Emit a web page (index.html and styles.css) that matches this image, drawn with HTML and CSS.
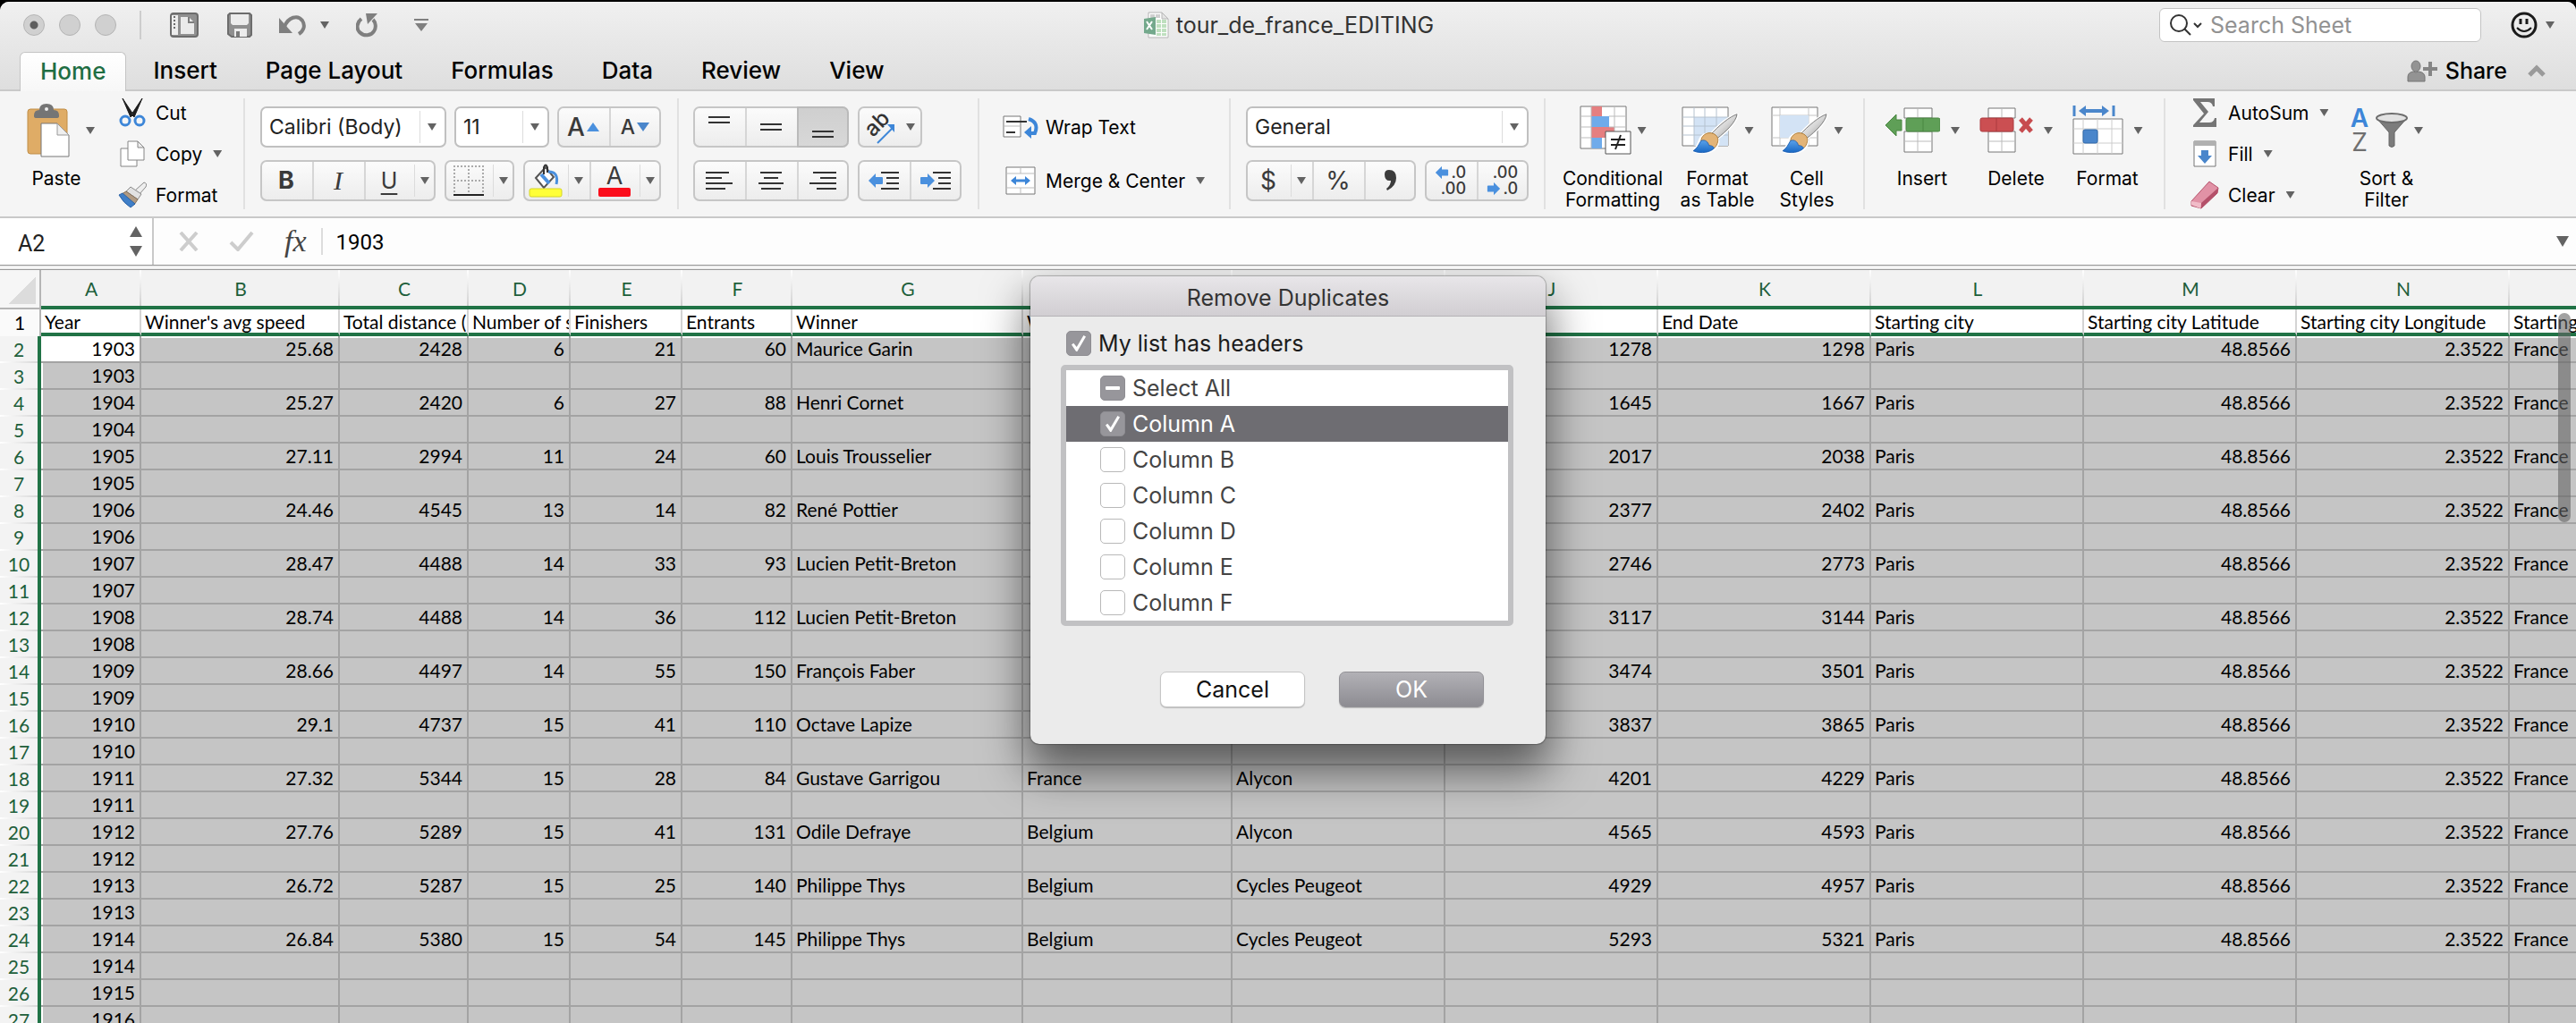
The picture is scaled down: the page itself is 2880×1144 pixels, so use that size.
FILE: index.html
```html
<!DOCTYPE html>
<html lang="en">
<head>
<meta charset="utf-8">
<title>tour_de_france_EDITING</title>
<link rel="stylesheet" href="styles.css">
</head>
<body>
<svg class="defs" aria-hidden="true">
  <defs>
    <linearGradient id="steel" x1="0" y1="0" x2="1" y2="1"><stop offset="0" stop-color="#fff"/><stop offset=".5" stop-color="#d8d8d8"/><stop offset="1" stop-color="#8d8d8d"/></linearGradient>
    <linearGradient id="paint" x1="0" y1="0" x2="0" y2="1"><stop offset="0" stop-color="#5aa2ea"/><stop offset="1" stop-color="#1767c4"/></linearGradient>
    <symbol id="brush" viewBox="0 0 52 62" preserveAspectRatio="none">
      <path d="M50 1C41 5 29 18 20 31l-4-1C8 32 8 41 6 46c-1 4-4 7-6 9 9 5 21 3 26-6 2-4 3-8 1-12C38 26 49 12 50 1z" fill="none" stroke="#fff" stroke-width="4"/>
      <path d="M50 1C42 4 29 18 20 31l7 6C38 26 49 12 50 1z" fill="url(#steel)" stroke="#6d6d6d" stroke-width="1"/>
      <path d="M13 31c5-5 13-2 15 5 1 5-1 12-4 15-6 0-12-5-15-10 0-4 1-7 4-10z" fill="#e3b477" stroke="#a9762f" stroke-width="1"/>
      <path d="M9 40c5-2 8 2 9 7 2 0 5 1 6 4-4 6-15 9-24 4 5-4 6-9 9-15z" fill="url(#paint)" stroke="#1f5fb0" stroke-width="1"/>
    </symbol>
    <symbol id="left" viewBox="0 0 18 18"><path d="M1 9 9 1v4h7a1 1 0 0 1 1 1v6a1 1 0 0 1-1 1H9v4z" fill="#4a90de"/></symbol>
  </defs>
</svg>
<div class="window">
  <header class="chrome">
    <div class="titlebar">
      <div class="quick">
        <button class="light light-dot" aria-label="Close"></button>
        <button class="light" aria-label="Minimize"></button>
        <button class="light" aria-label="Zoom"></button>
        <span class="quick-sep"></span>
        <button class="tool side" aria-label="Templates"><svg width="32" height="28"><rect x="1" y="1" width="30" height="26" rx="3" fill="#909090" stroke="#6c6c6c" stroke-width="2"/><path d="M2 3h7v22H2z" fill="#ececec"/><path d="M5 4v14" stroke="#6c6c6c" stroke-width="2" stroke-dasharray="2 2"/><path d="M12 5h9l6 6v13H12z" fill="#eaeaea"/><path d="M21 5v6h6" fill="none" stroke="#7d7d7d" stroke-width="2"/></svg></button>
        <button class="tool" aria-label="Save"><svg width="28" height="28"><path d="M3 1h22l2 2v22l-2 2H5l-4-3V3z" fill="#8f8f8f" stroke="#6c6c6c" stroke-width="2"/><path d="M4 2h20v10l-2 2H6l-2-2z" fill="#ececec"/><path d="M8 18h14v9H8z" fill="#ececec"/><path d="M10 21h4v6h-4z" fill="#7a7a7a"/></svg></button>
        <button class="tool undo" aria-label="Undo"><svg width="30" height="24"><path d="M6 14C10 3 21 0 26 7c4 6 1 12-4 15" fill="none" stroke="#7f7f7f" stroke-width="4"/><path d="M0 4v17h15z" fill="#7f7f7f"/></svg><i class="caret"></i></button>
        <button class="tool" aria-label="Repeat"><svg width="24" height="28"><path d="M6 7C1 11 0 18 4 22c5 5 13 4 16-1 3-4 2-10-1-13" fill="none" stroke="#7f7f7f" stroke-width="4"/><path d="M11 1h13l-11 12z" fill="#7f7f7f"/></svg></button>
        <button class="tool custom" aria-label="Customize toolbar"><svg width="18" height="16"><path d="M1 1h16v2H1zM2 6h14l-7 9z" fill="#7f7f7f"/></svg></button>
      </div>
      <h1 class="title"><svg width="28" height="30"><path d="M5 1h15l7 7v21H5z" fill="#fdfdfd" stroke="#b5b5b5"/><path d="M20 1v7h7z" fill="#e4e4e4" stroke="#b5b5b5"/><path d="M7 3h5v4H7zM13 3h5v4h-5z" fill="#cfcfcf"/><path d="M14 9h5v4h-5zM20 9h5v4h-5zM14 14h5v4h-5zM20 14h5v4h-5zM14 19h5v4h-5zM20 19h5v4h-5zM14 24h5v3h-5zM20 24h5v3h-5z" fill="#bfe0bf"/><path d="M0 8l13-2v20L0 24z" fill="#74a98c"/><path d="M3 11l6 9M9 11l-6 9" stroke="#fff" stroke-width="2"/></svg>tour_de_france_EDITING</h1>
      <div class="right">
        <label class="search"><svg width="36" height="24"><circle cx="10" cy="10" r="9" fill="none" stroke="#333" stroke-width="2"/><path d="M16 16l7 7M27 10l4 4 4-4" fill="none" stroke="#333" stroke-width="2"/></svg><input type="search" placeholder="Search Sheet" aria-label="Search Sheet"></label>
        <button class="smile" aria-label="Feedback"><svg width="30" height="30"><circle cx="15" cy="15" r="13" fill="none" stroke="#1b1b1b" stroke-width="3"/><path d="M11 8v6M18 8v6" stroke="#1b1b1b" stroke-width="3"/><path d="M7 18q8 8 16 0" fill="none" stroke="#1b1b1b" stroke-width="2"/></svg><i class="caret"></i></button>
      </div>
    </div>
    <nav class="tabs">
      <a class="tab active" href="#home">Home</a>
      <a class="tab" href="#insert">Insert</a>
      <a class="tab" href="#layout">Page Layout</a>
      <a class="tab" href="#formulas">Formulas</a>
      <a class="tab" href="#data">Data</a>
      <a class="tab" href="#review">Review</a>
      <a class="tab" href="#view">View</a>
      <div class="share">
        <button class="share-btn"><svg width="34" height="25"><ellipse cx="10" cy="7" rx="5" ry="6" fill="#939393" stroke="#757575"/><path d="M1 24v-5q0-5 6-6 3 2 6 0 7 1 7 6v5z" fill="#939393" stroke="#757575"/><path d="M18 10h16M26 2v16" stroke="#858585" stroke-width="4"/></svg>Share</button>
        <button class="collapse" aria-label="Collapse ribbon"><svg width="20" height="14"><path d="M2 12l8-8 8 8" fill="none" stroke="#9a9a9a" stroke-width="5"/></svg></button>
      </div>
    </nav>
  </header>

  <section class="ribbon" aria-label="Home">
    <div class="group clip">
      <button class="big paste"><span class="big-icon"><svg width="48" height="60"><rect x="1" y="6" width="44" height="50" rx="3" fill="#dfac66" stroke="#c08d46"/><path d="M8 13q0-6 6-6 0-7 8-7t8 7q6 0 6 6v1q0 2-3 2H11q-3 0-3-2z" fill="#757575"/><circle cx="22" cy="6" r="2" fill="#eee"/><path d="M16 22h18l13 13v24H16z" fill="#fff" stroke="#777"/><path d="M34 22v13h13z" fill="#efefef" stroke="#999"/></svg><i class="caret"></i></span><span class="big-label">Paste</span></button>
      <div class="stack clip-stack">
        <button class="item"><span class="ico"><svg width="30" height="32"><path d="M4 0l12 18-3 3zM26 0L14 18l3 3z" fill="#1d1d1d" stroke="#1d1d1d"/><ellipse cx="7" cy="25" rx="5" ry="5" fill="none" stroke="#3d86d8" stroke-width="3"/><ellipse cx="23" cy="25" rx="5" ry="5" fill="none" stroke="#3d86d8" stroke-width="3"/></svg></span>Cut</button>
        <button class="item"><span class="ico"><svg width="28" height="30"><path d="M1 9h18v20H1z" fill="#fff" stroke="#858585"/><path d="M9 1h11l7 7v14H9z" fill="#fff" stroke="#858585"/><path d="M20 1v7h7z" fill="#eee" stroke="#858585"/></svg></span>Copy<i class="caret"></i></button>
        <button class="item"><span class="ico"><svg width="32" height="30"><path d="M29 1q4 1 2 5l-7 8-5-4z" fill="#eee" stroke="#888"/><path d="M14 6l12 8-4 6L9 11z" fill="#e2e2e2" stroke="#8a8a8a"/><path d="M9 11l13 9-4 6L4 14z" fill="#b09a82" stroke="#84705a"/><path d="M5 13l14 12-5 4Q6 24 1 15z" fill="#3f7fc8" stroke="#2c62a4"/></svg></span>Format</button>
      </div>
    </div>
    <span class="sep"></span>

    <div class="group rows font-group">
      <div class="row row-font">
        <span class="combo font-name"><select aria-label="Font"><option>Calibri (Body)</option></select><i class="caret"></i></span>
        <span class="combo font-size"><select aria-label="Font size"><option>11</option></select><i class="caret"></i></span>
        <span class="seg">
          <button class="w58 grow" aria-label="Increase font size"><b class="glyph-a">A</b><svg width="14" height="10"><path d="M7 0l7 10H0z" fill="#4a90de"/></svg></button>
          <button class="w58 grow" aria-label="Decrease font size"><b class="glyph-a small">A</b><svg width="14" height="10"><path d="M7 10l7-10H0z" fill="#4a86cb"/></svg></button>
        </span>
      </div>
      <div class="row">
        <span class="seg">
          <button class="w58"><b>B</b></button><button class="w58 italic">I</button><button class="w56 under">U</button><button class="w24 inner" aria-label="Underline styles"><i class="caret"></i></button>
        </span>
        <span class="seg">
          <button class="w54" aria-label="Borders"><svg width="34" height="34"><path d="M1 0v32M17 0v32M33 0v32M0 1h34M0 17h34" stroke="#aaa" stroke-width="2" stroke-dasharray="2 2"/><path d="M0 33h34" stroke="#222" stroke-width="2"/></svg></button><button class="w24 inner" aria-label="Border styles"><i class="caret"></i></button>
        </span>
        <span class="seg">
          <button class="w50" aria-label="Fill colour"><svg width="38" height="38"><path d="M8 16l11-12 9 11-11 12z" fill="#fff" stroke="#555" stroke-width="2"/><path d="M14 12l9 10" stroke="#4a90de" stroke-width="4"/><path d="M17 12V4q2-5 4 0v6" fill="none" stroke="#333" stroke-width="2"/><path d="M22 9q12 0 9 14" fill="none" stroke="#4a90de" stroke-width="3"/><rect x="1" y="28" width="36" height="9" rx="2" fill="#ffff38" stroke="#d5d526"/></svg></button><button class="w24 inner" aria-label="Fill colours"><i class="caret"></i></button>
          <button class="w56 color" aria-label="Font colour"><span>A</span><i class="swatch"></i></button><button class="w24 inner" aria-label="Font colours"><i class="caret"></i></button>
        </span>
      </div>
    </div>
    <span class="sep"></span>

    <div class="group rows align-group">
      <div class="row">
        <span class="seg">
          <button class="w58" aria-label="Align top"><svg width="32" height="32"><path d="M4 5h24M4 11h24" stroke="#333" stroke-width="2"/></svg></button>
          <button class="w58" aria-label="Align middle"><svg width="32" height="32"><path d="M4 13h24M4 19h24" stroke="#333" stroke-width="2"/></svg></button>
          <button class="w58 pressed" aria-label="Align bottom"><svg width="32" height="32"><path d="M4 21h24M4 27h24" stroke="#333" stroke-width="2"/></svg></button>
        </span>
        <span class="seg"><button class="orient" aria-label="Orientation"><svg class="orient-icon" width="36" height="40"><text x="0" y="0" transform="translate(9 32) rotate(-45)" class="ab">ab</text><path d="M14 38L31 21" stroke="#3d86d8" stroke-width="2"/><path d="M25 17h8v9z" fill="#3d86d8"/></svg><i class="caret"></i></button></span>
      </div>
      <div class="row">
        <span class="seg">
          <button class="w58" aria-label="Align left"><svg width="32" height="24"><path d="M1 3h26M1 9h18M1 15h30M1 21h22" stroke="#333" stroke-width="2"/></svg></button>
          <button class="w58" aria-label="Align centre"><svg width="32" height="24"><path d="M4 3h24M8 9h16M2 15h28M5 21h22" stroke="#333" stroke-width="2"/></svg></button>
          <button class="w58" aria-label="Align right"><svg width="32" height="24"><path d="M5 3h26M13 9h18M1 15h30M9 21h22" stroke="#333" stroke-width="2"/></svg></button>
        </span>
        <span class="seg">
          <button class="w58" aria-label="Decrease indent"><svg width="36" height="26"><use href="#left" x="0" y="4" width="18" height="18"/><path d="M15 4h20M21 10h14M21 16h14M15 22h20" stroke="#333" stroke-width="2"/></svg></button>
          <button class="w58" aria-label="Increase indent"><svg width="36" height="26"><use href="#left" transform="translate(18 4) scale(-1 1)" width="18" height="18"/><path d="M15 4h20M21 10h14M21 16h14M15 22h20" stroke="#333" stroke-width="2"/></svg></button>
        </span>
      </div>
    </div>
    <span class="sep"></span>

    <div class="group wrap-group">
      <button class="item"><span class="ico wide"><svg width="40" height="26"><path d="M1 1h19v23H1z" fill="#fff" stroke="#777"/><path d="M1 12h19" stroke="#bbb"/><path d="M4 7h23M4 19h10" stroke="#333" stroke-width="2"/><path d="M29 4q12 4 7 16h-5" fill="none" stroke="#3d86d8" stroke-width="4"/><path d="M24 19l8-7v14z" fill="#3d86d8"/></svg></span>Wrap Text</button>
      <button class="item"><span class="ico wide"><svg width="34" height="32"><path d="M1 1h32v30H1z" fill="#fff" stroke="#777"/><path d="M1 8h32M1 24h32M17 1v7M17 24v7" stroke="#bbb"/><path d="M8 16h18" stroke="#3d86d8" stroke-width="3"/><path d="M6 16l6-5v10zM28 16l-6-5v10z" fill="#3d86d8"/></svg></span>Merge &amp; Center<i class="caret"></i></button>
    </div>
    <span class="sep"></span>

    <div class="group rows number-group">
      <div class="row"><span class="combo format"><select aria-label="Number format"><option>General</option></select><i class="caret"></i></span></div>
      <div class="row">
        <span class="seg">
          <button class="w50 sym">$</button><button class="w24 inner" aria-label="Currencies"><i class="caret"></i></button><button class="w58 sym">%</button><button class="w58" aria-label="Comma style"><svg width="14" height="24"><path d="M1 5q0-5 5-5 8 0 8 9 0 9-10 14l-1-2q5-4 5-9-7 1-7-7z" fill="#3c3c3c"/></svg></button>
        </span>
        <span class="seg">
          <button class="w58 dec" aria-label="Increase decimal"><span><svg width="16" height="14"><use href="#left" width="16" height="16" y="-1"/></svg>.0</span><span>.00</span></button>
          <button class="w58 dec" aria-label="Decrease decimal"><span>.00</span><span><svg width="16" height="14"><use href="#left" transform="translate(16 -1) scale(-1 1)" width="16" height="16"/></svg>.0</span></button>
        </span>
      </div>
    </div>
    <span class="sep"></span>

    <div class="group styles-group">
      <button class="big cond"><span class="big-icon tight"><svg width="58" height="56"><path d="M1 1h51v47H1z" fill="#fff" stroke="#777"/><path d="M13 1h12v11H13zM13 24h26v12H13z" fill="#e57f80"/><path d="M13 12h20v12H13zM13 36h12v12H13z" fill="#6fabea"/><path d="M1 12h12M33 12h19M1 24h12M33 24h19M1 36h12M39 1v35M13 1v47" stroke="#bbb"/><path d="M29 29h28v25H29z" fill="#fff" stroke="#555"/><path d="M35 38h16M35 44h16M46 33l-6 16" stroke="#222" stroke-width="2"/></svg><i class="caret"></i></span><span class="big-label">Conditional<br>Formatting</span></button>
      <button class="big table-btn"><span class="big-icon tight"><svg width="64" height="56"><path d="M1 2h51v43H1z" fill="#fff" stroke="#777"/><path d="M14 13h38v32H14z" fill="#d3e3f5"/><path d="M14 2v43M26 2v43M39 2v43M1 13h51M1 23h51M1 33h51" stroke="#b5c2cf"/><use href="#brush" x="13" y="9" width="51" height="47"/></svg><i class="caret"></i></span><span class="big-label">Format<br>as Table</span></button>
      <button class="big cell-btn"><span class="big-icon tight"><svg width="64" height="56"><path d="M1 2h51v43H1z" fill="#fff" stroke="#777"/><path d="M10 2v43M42 2v43M1 11h51M1 36h51" stroke="#c4c4c4"/><path d="M10 11h32v25H10z" fill="#d3e3f5"/><use href="#brush" x="13" y="9" width="51" height="47"/></svg><i class="caret"></i></span><span class="big-label">Cell<br>Styles</span></button>
    </div>
    <span class="sep"></span>

    <div class="group cells-group">
      <button class="big insert"><span class="big-icon"><svg width="62" height="56"><path d="M22 3h31v11H22zM22 29h31v23H22z" fill="#fff" stroke="#777"/><path d="M37 3v11M37 29v23M22 40h31" stroke="#bbb"/><rect x="24" y="14" width="38" height="15" rx="2" fill="#5f9f57" stroke="#4a8742"/><path d="M43 14v15" stroke="#4a8742"/><path d="M1 22l12-12v6h6v12h-6v6z" fill="#5f9f57" stroke="#4a8742"/></svg><i class="caret"></i></span><span class="big-label">Insert</span></button>
      <button class="big delete"><span class="big-icon"><svg width="60" height="56"><path d="M10 3h30v11H10zM10 29h30v23H10z" fill="#fff" stroke="#777"/><path d="M25 3v11M25 29v23M10 40h30" stroke="#bbb"/><rect x="1" y="14" width="37" height="15" rx="2" fill="#cb4f52" stroke="#ac3b3e"/><path d="M19 14v15" stroke="#ac3b3e"/><path d="M46 15l12 14M58 15L46 29" stroke="#c74b4e" stroke-width="5"/></svg><i class="caret"></i></span><span class="big-label">Delete</span></button>
      <button class="big format"><span class="big-icon"><svg width="57" height="58"><path d="M2 1v12M46 1v12" stroke="#4a86cb" stroke-width="3"/><path d="M12 7h24" stroke="#4a86cb" stroke-width="4"/><path d="M7 7l8-6v12zM41 7l-8-6v12z" fill="#4a86cb"/><path d="M1 16h55v39H1z" fill="#fff" stroke="#777"/><path d="M12 16v39M28 16v39M44 16v39M1 27h55M1 43h55" stroke="#ccc"/><rect x="12" y="28" width="16" height="15" rx="2" fill="#4a86cb" stroke="#2f68aa"/></svg><i class="caret"></i></span><span class="big-label">Format</span></button>
    </div>
    <span class="sep"></span>

    <div class="group edit-group">
      <div class="stack edit-stack">
        <button class="item"><span class="ico"><svg width="28" height="32"><path d="M1 0h24v9h-2q-1-5-6-5H9l9 11L8 27h11q5 0 6-5h2v10H1v-2l12-13L1 2z" fill="#757575"/></svg></span>AutoSum<i class="caret"></i></button>
        <button class="item"><span class="ico"><svg width="26" height="30"><path d="M1 1h24v28H1z" fill="#fff" stroke="#777"/><path d="M1 1h24v5H1z" fill="#b0b0b0"/><path d="M9 11h8v6h4l-8 9-8-9h4z" fill="#4a86cb"/></svg></span>Fill<i class="caret"></i></button>
        <button class="item"><span class="ico"><svg width="32" height="32"><path d="M1 23L21 1l10 7-1 6L12 31 1 28z" fill="#e192a6" stroke="#b5526b"/><path d="M1 23l11 2-1 6-10-4z" fill="#f0bcc8"/><path d="M12 25L31 8l-1 6-18 17z" fill="#b4506a"/></svg></span>Clear<i class="caret"></i></button>
      </div>
      <button class="big sort"><span class="big-icon tight"><span class="az"><b>A</b><span>Z</span></span><svg width="36" height="40"><path d="M1 6l14 16v15q3 3 6 0V22L35 6z" fill="#7c7c7c" stroke="#666"/><ellipse cx="18" cy="6" rx="17" ry="5" fill="#e2e2e2" stroke="#6d6d6d" stroke-width="2"/></svg><i class="caret"></i></span><span class="big-label">Sort &amp;<br>Filter</span></button>
    </div>
  </section>

  <section class="formula">
    <div class="namebox"><input type="text" value="A2" aria-label="Name box"><svg width="14" height="34"><path d="M7 0l7 12H0zM7 34l7-12H0z" fill="#636363"/></svg></div>
    <button class="f-btn" aria-label="Cancel entry"><svg width="22" height="22"><path d="M2 1l18 20M20 1L2 21" stroke="#cdcdcd" stroke-width="4"/></svg></button>
    <button class="f-btn check" aria-label="Accept entry"><svg width="28" height="22"><path d="M2 12l8 8L26 1" fill="none" stroke="#cdcdcd" stroke-width="4"/></svg></button>
    <button class="f-btn fx">fx</button>
    <span class="f-sep"></span>
    <input class="f-input" type="text" value="1903" aria-label="Formula">
    <button class="f-btn" aria-label="Expand formula bar"><svg width="14" height="12"><path d="M0 0h14L7 12z" fill="#636363"/></svg></button>
  </section>
  <div class="rule"></div>

  <main class="sheet">
    <table class="grid">
      <colgroup><col class="c-row"><col class="c-a"><col class="c-b"><col class="c-c"><col class="c-d"><col class="c-e"><col class="c-f"><col class="c-g"><col class="c-h"><col><col><col><col><col><col><col></colgroup>
      <thead><tr><th class="corner"></th><th>A</th><th>B</th><th>C</th><th>D</th><th>E</th><th>F</th><th>G</th><th>H</th><th>I</th><th>J</th><th>K</th><th>L</th><th>M</th><th>N</th><th></th></tr></thead>
      <tbody>
        <tr class="names"><th>1</th><td>Year</td><td>Winner's avg speed</td><td>Total distance (km)</td><td>Number of stages</td><td>Finishers</td><td>Entrants</td><td>Winner</td><td>Winner's country</td><td></td><td></td><td>End Date</td><td>Starting city</td><td>Starting city Latitude</td><td>Starting city Longitude</td><td>Starting country</td></tr>
        <tr><th>2</th><td>1903</td><td>25.68</td><td>2428</td><td>6</td><td>21</td><td>60</td><td>Maurice Garin</td><td></td><td></td><td>1278</td><td>1298</td><td>Paris</td><td>48.8566</td><td>2.3522</td><td>France</td></tr>
        <tr><th>3</th><td>1903</td><td></td><td></td><td></td><td></td><td></td><td></td><td></td><td></td><td></td><td></td><td></td><td></td><td></td><td></td></tr>
        <tr><th>4</th><td>1904</td><td>25.27</td><td>2420</td><td>6</td><td>27</td><td>88</td><td>Henri Cornet</td><td></td><td></td><td>1645</td><td>1667</td><td>Paris</td><td>48.8566</td><td>2.3522</td><td>France</td></tr>
        <tr><th>5</th><td>1904</td><td></td><td></td><td></td><td></td><td></td><td></td><td></td><td></td><td></td><td></td><td></td><td></td><td></td><td></td></tr>
        <tr><th>6</th><td>1905</td><td>27.11</td><td>2994</td><td>11</td><td>24</td><td>60</td><td>Louis Trousselier</td><td></td><td></td><td>2017</td><td>2038</td><td>Paris</td><td>48.8566</td><td>2.3522</td><td>France</td></tr>
        <tr><th>7</th><td>1905</td><td></td><td></td><td></td><td></td><td></td><td></td><td></td><td></td><td></td><td></td><td></td><td></td><td></td><td></td></tr>
        <tr><th>8</th><td>1906</td><td>24.46</td><td>4545</td><td>13</td><td>14</td><td>82</td><td>René Pottier</td><td></td><td></td><td>2377</td><td>2402</td><td>Paris</td><td>48.8566</td><td>2.3522</td><td>France</td></tr>
        <tr><th>9</th><td>1906</td><td></td><td></td><td></td><td></td><td></td><td></td><td></td><td></td><td></td><td></td><td></td><td></td><td></td><td></td></tr>
        <tr><th>10</th><td>1907</td><td>28.47</td><td>4488</td><td>14</td><td>33</td><td>93</td><td>Lucien Petit-Breton</td><td></td><td></td><td>2746</td><td>2773</td><td>Paris</td><td>48.8566</td><td>2.3522</td><td>France</td></tr>
        <tr><th>11</th><td>1907</td><td></td><td></td><td></td><td></td><td></td><td></td><td></td><td></td><td></td><td></td><td></td><td></td><td></td><td></td></tr>
        <tr><th>12</th><td>1908</td><td>28.74</td><td>4488</td><td>14</td><td>36</td><td>112</td><td>Lucien Petit-Breton</td><td></td><td></td><td>3117</td><td>3144</td><td>Paris</td><td>48.8566</td><td>2.3522</td><td>France</td></tr>
        <tr><th>13</th><td>1908</td><td></td><td></td><td></td><td></td><td></td><td></td><td></td><td></td><td></td><td></td><td></td><td></td><td></td><td></td></tr>
        <tr><th>14</th><td>1909</td><td>28.66</td><td>4497</td><td>14</td><td>55</td><td>150</td><td>François Faber</td><td></td><td></td><td>3474</td><td>3501</td><td>Paris</td><td>48.8566</td><td>2.3522</td><td>France</td></tr>
        <tr><th>15</th><td>1909</td><td></td><td></td><td></td><td></td><td></td><td></td><td></td><td></td><td></td><td></td><td></td><td></td><td></td><td></td></tr>
        <tr><th>16</th><td>1910</td><td>29.1</td><td>4737</td><td>15</td><td>41</td><td>110</td><td>Octave Lapize</td><td></td><td></td><td>3837</td><td>3865</td><td>Paris</td><td>48.8566</td><td>2.3522</td><td>France</td></tr>
        <tr><th>17</th><td>1910</td><td></td><td></td><td></td><td></td><td></td><td></td><td></td><td></td><td></td><td></td><td></td><td></td><td></td><td></td></tr>
        <tr><th>18</th><td>1911</td><td>27.32</td><td>5344</td><td>15</td><td>28</td><td>84</td><td>Gustave Garrigou</td><td>France</td><td>Alycon</td><td>4201</td><td>4229</td><td>Paris</td><td>48.8566</td><td>2.3522</td><td>France</td></tr>
        <tr><th>19</th><td>1911</td><td></td><td></td><td></td><td></td><td></td><td></td><td></td><td></td><td></td><td></td><td></td><td></td><td></td><td></td></tr>
        <tr><th>20</th><td>1912</td><td>27.76</td><td>5289</td><td>15</td><td>41</td><td>131</td><td>Odile Defraye</td><td>Belgium</td><td>Alycon</td><td>4565</td><td>4593</td><td>Paris</td><td>48.8566</td><td>2.3522</td><td>France</td></tr>
        <tr><th>21</th><td>1912</td><td></td><td></td><td></td><td></td><td></td><td></td><td></td><td></td><td></td><td></td><td></td><td></td><td></td><td></td></tr>
        <tr><th>22</th><td>1913</td><td>26.72</td><td>5287</td><td>15</td><td>25</td><td>140</td><td>Philippe Thys</td><td>Belgium</td><td>Cycles Peugeot</td><td>4929</td><td>4957</td><td>Paris</td><td>48.8566</td><td>2.3522</td><td>France</td></tr>
        <tr><th>23</th><td>1913</td><td></td><td></td><td></td><td></td><td></td><td></td><td></td><td></td><td></td><td></td><td></td><td></td><td></td><td></td></tr>
        <tr><th>24</th><td>1914</td><td>26.84</td><td>5380</td><td>15</td><td>54</td><td>145</td><td>Philippe Thys</td><td>Belgium</td><td>Cycles Peugeot</td><td>5293</td><td>5321</td><td>Paris</td><td>48.8566</td><td>2.3522</td><td>France</td></tr>
        <tr><th>25</th><td>1914</td><td></td><td></td><td></td><td></td><td></td><td></td><td></td><td></td><td></td><td></td><td></td><td></td><td></td><td></td></tr>
        <tr><th>26</th><td>1915</td><td></td><td></td><td></td><td></td><td></td><td></td><td></td><td></td><td></td><td></td><td></td><td></td><td></td><td></td></tr>
        <tr><th>27</th><td>1916</td><td></td><td></td><td></td><td></td><td></td><td></td><td></td><td></td><td></td><td></td><td></td><td></td><td></td><td></td></tr>
      </tbody>
    </table>
    <div class="thumb"></div>
    <form class="dialog" role="dialog" aria-labelledby="dlg-title">
      <h2 id="dlg-title">Remove Duplicates</h2>
      <div class="dialog-body">
        <label class="headers"><input type="checkbox" checked>My list has headers</label>
        <ul class="columns">
          <li><label><input type="checkbox" class="mixed">Select All</label></li>
          <li class="selected"><label><input type="checkbox" checked>Column A</label></li>
          <li><label><input type="checkbox">Column B</label></li>
          <li><label><input type="checkbox">Column C</label></li>
          <li><label><input type="checkbox">Column D</label></li>
          <li><label><input type="checkbox">Column E</label></li>
          <li><label><input type="checkbox">Column F</label></li>
        </ul>
        <div class="actions"><button type="button" class="cancel">Cancel</button><button type="button" class="ok">OK</button></div>
      </div>
    </form>
  </main>
</div>
</body>
</html>
```
FILE: styles.css
```css
* { box-sizing: border-box; }
html, body { height: 100%; }
body { margin: 0; padding-top: 2px; background: #000; overflow: hidden; color: #000; font-family: Inter, "Liberation Sans", sans-serif; font-size: 21px; }
button, input, select { margin: 0; padding: 0; border: 0; background: none; color: inherit; font: inherit; appearance: none; outline: none; }
svg { display: block; flex: none; }
.defs { position: absolute; width: 0; height: 0; }
.window { display: flex; flex-direction: column; height: 100%; overflow: hidden; border-radius: 10px 10px 0 0; background: #fff; }
.caret { flex: none; width: 10px; height: 8px; background: #636363; clip-path: polygon(0 0, 100% 0, 50% 100%); }

/* Title bar and tabs */
.chrome { flex: none; background: linear-gradient(#f0f0f0, #dedede); border-bottom: 2px solid #c9c9c9; }
.titlebar { display: grid; grid-template-columns: 1fr auto 1fr; align-items: center; height: 56px; padding: 0 24px 4px 26px; }
.quick { display: flex; align-items: center; }
.light { width: 24px; height: 24px; margin-right: 16px; border: 1px solid #b4b4b4; border-radius: 50%; background: #d0d0d0; }
.light-dot { background: radial-gradient(circle, #5e5e5e 4px, #d0d0d0 5px); }
.quick-sep { width: 2px; height: 32px; margin: 0 32px 0 10px; background: #cdcdcd; }
.tool { display: flex; align-items: center; margin-right: 30px; }
.tool.side { margin-right: 32px; }
.tool .caret { margin-left: 16px; }
.custom { margin-left: 10px; }
.title { display: flex; align-items: center; gap: 8px; margin: 0; font-size: 25px; font-weight: 400; color: #333; line-height: 32px; }
.right { display: flex; align-items: center; justify-content: flex-end; }
.search { display: flex; align-items: center; gap: 9px; width: 360px; height: 38px; margin-right: 33px; padding-left: 11px; border: 1px solid #c3c3c3; border-radius: 6px; background: #fff; }
.search input { flex: 1; min-width: 0; font-size: 25px; }
.search input::placeholder { color: #929292; }
.smile { display: flex; align-items: center; gap: 9px; }
.tabs { display: flex; align-items: flex-end; gap: 6px; height: 42px; padding: 0 34px 0 22px; }
.tab { flex: none; height: 42px; padding: 0 24px; font-size: 26px; font-weight: 500; line-height: 42px; color: #000; text-decoration: none; }
.tab.active { height: 44px; margin-bottom: -2px; padding: 0 22px; color: #1f6e43; border: 1px solid #c4c4c4; border-bottom: 0; border-radius: 6px 6px 0 0; background: linear-gradient(#fff, #f7f7f7); }
.share { display: flex; align-items: center; gap: 23px; height: 42px; margin-left: auto; }
.share-btn { display: flex; align-items: center; gap: 9px; font-size: 25px; font-weight: 500; }

/* Ribbon */
.ribbon { flex: none; display: flex; height: 142px; background: #f5f5f5; border-bottom: 2px solid #c9c9c9; }
.sep { flex: none; width: 2px; margin: 8px 0; background: #e1e1e1; }
.group { flex: none; display: flex; }
.rows { flex-direction: column; justify-content: center; gap: 14px; }
.row { display: flex; gap: 10px; }
.row-font { gap: 9px; }
.stack { display: flex; flex-direction: column; justify-content: center; }
.item { display: flex; align-items: center; height: 46px; white-space: nowrap; }
.item .caret { margin-left: 12px; }
.ico { display: flex; justify-content: center; flex: none; width: 32px; margin-right: 10px; }
.ico.wide { width: 40px; margin-right: 8px; }
.clip { padding: 0 24px 0 30px; gap: 26px; }
.clip-stack { width: 116px; }
.font-group { padding: 0 18px 0 17px; }
.align-group { padding: 0 18px 0 16px; }
.wrap-group { flex-direction: column; justify-content: center; gap: 14px; width: 279px; padding-left: 26px; }
.number-group { padding: 0 17px; }
.styles-group { gap: 14px; padding: 0 22px 0 17px; }
.cells-group { gap: 20px; padding: 0 23px 0 21px; }
.edit-group { padding-left: 28px; gap: 22px; }
.edit-stack { width: 158px; }
.big { display: flex; flex-direction: column; align-items: center; padding-top: 12px; }
.big-icon { display: flex; align-items: center; justify-content: center; gap: 12px; height: 64px; }
.big-icon.tight { gap: 7px; }
.big-label { margin-top: 10px; line-height: 24px; white-space: nowrap; text-align: center; }
.paste { align-items: flex-start; }
.paste .big-icon { gap: 18px; }
.paste .big-label { width: 66px; }
.cond { width: 116px; }
.table-btn { width: 90px; }
.cell-btn { width: 82px; }
.insert { width: 86px; }
.delete { width: 84px; }
.big.format { width: 80px; }
.sort { width: 78px; }
.az { display: flex; flex-direction: column; align-items: center; width: 22px; font-size: 28px; line-height: 27px; color: #6f6f6f; }
.az b { font-weight: 600; color: #3d86d8; }

.combo { display: flex; align-items: center; height: 46px; padding-right: 9px; border: 2px solid #c0c0c0; border-radius: 7px; background: #fff; }
.combo select { flex: 1; min-width: 0; height: 36px; margin-right: 8px; padding-left: 8px; border-right: 1px solid #dcdcdc; font-size: 23px; color: #222; }
.font-name { width: 208px; }
.font-size { width: 106px; }
.combo.format { width: 316px; }
.seg { display: flex; height: 46px; box-shadow: inset 0 0 0 2px #c6c6c6; border-radius: 7px; background: linear-gradient(#fcfcfc, #ececec); overflow: hidden; color: #3a3a3a; }
.seg button { display: flex; align-items: center; justify-content: center; flex: none; height: 46px; font-size: 27px; line-height: 32px; }
.seg button + button { background: linear-gradient(#d6d6d6, #d6d6d6) left center / 2px 42px no-repeat; }
.seg button.inner { background: linear-gradient(#dcdcdc, #dcdcdc) left center / 1px 36px no-repeat; }
.w58 { width: 58px; }
.w56 { width: 56px; }
.w54 { width: 54px; }
.w50 { width: 50px; }
.w24 { width: 24px; }
.seg .grow { gap: 2px; }
.glyph-a { font-weight: 500; font-size: 28px; }
.glyph-a.small { font-size: 23px; }
.seg .italic { font-family: "Liberation Serif", serif; font-style: italic; font-size: 30px; }
.seg .under { text-decoration: underline; text-underline-offset: 5px; font-size: 25px; }
.seg .color { flex-direction: column; line-height: 26px; }
.swatch { width: 36px; height: 10px; border-radius: 2px; background: #fb0d1b; }
.seg button.pressed { border-radius: 0 7px 7px 0; background: linear-gradient(#cfcfcf, #d8d8d8); box-shadow: inset 0 0 0 2px #bababa; }
.seg .orient { gap: 10px; width: 72px; }
.orient-icon { overflow: visible; }
.ab { font: 500 24px Inter, sans-serif; fill: #333; }
.seg .sym { font-size: 28px; }
.seg .dec { flex-direction: column; align-items: flex-end; padding-right: 12px; font-size: 18px; font-weight: 500; line-height: 18px; }
.dec span { display: flex; align-items: center; gap: 2px; }

/* Formula bar */
.formula { flex: none; display: flex; align-items: center; height: 52px; padding-right: 8px; background: #fdfdfd; font-family: Roboto, sans-serif; }
.namebox { display: flex; align-items: center; width: 172px; height: 52px; padding: 0 11px 0 20px; border-right: 2px solid #c9c9c9; background: #fff; }
.namebox input { flex: 1; min-width: 0; padding-top: 4px; font-size: 25px; color: #222; }
.f-btn { display: flex; margin: 0 0 0 28px; }
.f-btn.check { margin-left: 34px; }
.fx { margin-left: 34px; font: italic 34px/34px "Liberation Serif", serif; color: #444; }
.f-sep { width: 2px; height: 30px; margin: 0 15px 0 16px; background: #dcdcdc; }
.f-input { flex: 1; min-width: 0; padding-top: 2px; font-size: 24px; }
.rule { flex: none; height: 6px; border-top: 1px solid #999; border-bottom: 1px solid #999; background: linear-gradient(#ddd, #fff 50%, #e4e4e4); }

/* Sheet */
.sheet { position: relative; flex: 1; min-height: 0; overflow: hidden; }
.grid { width: 3044px; table-layout: fixed; border-collapse: separate; border-spacing: 0; font-family: Lato, sans-serif; font-size: 21px; line-height: 26px; }
.grid col { width: 238px; }
.grid .c-row { width: 46px; }
.grid .c-a { width: 112px; }
.grid .c-b { width: 222px; }
.grid .c-c { width: 144px; }
.grid .c-d { width: 114px; }
.grid .c-e { width: 125px; }
.grid .c-f { width: 123px; }
.grid .c-g { width: 258px; }
.grid .c-h { width: 234px; }
.grid th, .grid td { overflow: hidden; padding: 0; font-weight: 400; white-space: nowrap; }
.grid thead th { height: 44px; padding-top: 2px; color: #1e5f3b; border-bottom: 4px solid #217346; background: linear-gradient(#fff, #d0d0d0) right / 2px 100% no-repeat #f2f2f2; }
.grid thead .corner { border-bottom: 2px solid #b5b5b5; background: linear-gradient(#b5b5b5, #b5b5b5) right / 2px 100% no-repeat, linear-gradient(135deg, transparent 50%, #dcdcdc 50%) 10px 8px / 30px 30px no-repeat #f6f6f6; }
tbody th { height: 30px; color: #1e5f3b; border-right: 4px solid #217346; background: linear-gradient(90deg, #fff, #d8d8d8) bottom / 100% 2px no-repeat #f3f3f3; }
tbody td { height: 30px; text-align: right; background: #c5c5c5; border-right: 2px solid #a3a3a3; border-bottom: 2px solid #a3a3a3; }
.grid td { padding: 0 5px 0 4px; }
tbody td:nth-child(8), tbody td:nth-child(9), tbody td:nth-child(10), tbody td:nth-child(13), tbody td:nth-child(16) { text-align: left; }
tbody td:nth-child(2) { box-shadow: inset 2px 0 #fff; }
.names th { color: #000; border-right: 2px solid #b5b5b5; background: #fafafa; }
.grid .names td { padding-top: 2px; text-align: left; background: #fff; border-right-color: #d4d4d4; border-bottom: 4px solid #217346; line-height: 24px; }
.names + tr td { box-shadow: inset 0 2px #fff; }
.names + tr td:nth-child(2) { background: #fff; }
.thumb { position: absolute; top: 48px; right: 6px; width: 14px; height: 234px; border-radius: 7px; background: rgba(100, 100, 100, .6); }

/* Remove Duplicates dialog */
.dialog { position: absolute; top: 7px; left: 0; right: 0; width: 576px; margin: 0 auto; border-radius: 10px; background: #ebebeb; box-shadow: 0 0 1px 1px rgba(0, 0, 0, .25), 0 26px 50px 4px rgba(0, 0, 0, .55); font-size: 25px; color: #1c1c1c; }
.dialog h2 { height: 45px; margin: 0; border-bottom: 1px solid #b5b3b6; border-radius: 10px 10px 0 0; background: linear-gradient(#e8e6e9, #d1ced2); font-size: 25px; font-weight: 400; line-height: 48px; text-align: center; color: #333; }
.dialog-body { padding: 16px 36px 41px 34px; }
.dialog label { display: flex; align-items: center; gap: 8px; }
.headers { height: 28px; margin: 0 0 10px 6px; }
.columns { margin: 0; padding: 0; list-style: none; border: 6px solid #c1c1c3; border-radius: 5px; background: #fff; color: #444; }
.columns label { height: 40px; padding-left: 38px; }
.selected { background: #6e6d72; color: #fff; }
.dialog input { flex: none; width: 28px; height: 28px; border: 1px solid #b9b9b9; border-radius: 5px; background: #fff; }
.dialog input:checked, .dialog .mixed { border-color: #8e8d92; background: #97969b; }
.dialog input:checked::after { content: ""; display: block; width: 16px; height: 18px; margin: 4px 5px; background: #fff; clip-path: polygon(0 58%, 14% 48%, 36% 72%, 84% 0, 100% 8%, 40% 100%, 32% 100%); }
.dialog .mixed::after { content: ""; display: block; width: 16px; height: 4px; margin: 11px 5px; border-radius: 1px; background: #fff; }
.actions { display: flex; justify-content: flex-end; gap: 38px; margin-top: 51px; padding-right: 33px; }
.actions button { width: 162px; height: 40px; border: 1px solid #c6c6c6; border-radius: 7px; background: #fff; box-shadow: 0 1px 1px rgba(0, 0, 0, .2); color: #111; }
.actions .ok { border-color: #929196; background: linear-gradient(#b2b1b6, #8d8c92); color: #fff; }
```
